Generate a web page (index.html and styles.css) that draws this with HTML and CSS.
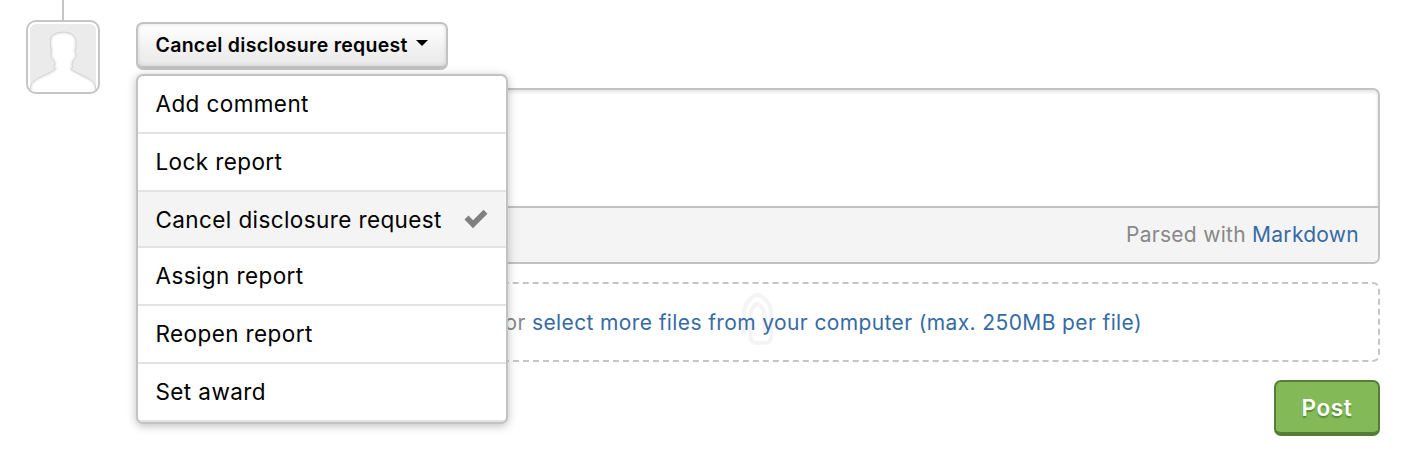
FILE: index.html
```html
<!DOCTYPE html>
<html lang="en">
<head>
<meta charset="utf-8">
<title>Report comment</title>
<link rel="stylesheet" href="styles.css">
</head>
<body>
<div class="composer">
  <div class="rail">
    <div class="thread-line"></div>
    <div class="avatar">
      <svg width="66" height="66" viewBox="0 0 66 66">
        <defs>
          <filter id="soft" x="-20%" y="-20%" width="140%" height="140%"><feGaussianBlur stdDeviation="1.3"/></filter>
          <path id="figure" d="M0.500 68V62C2 54 19 51 25.500 45L23.500 43C25.500 41 25 39 23.500 36C21 35 20 30 21.500 27.500C20 20 19 13 23 11C27 7.500 39 7 43 11C47 14 46.500 21 45 27.500C47 30 46 35 43.500 36C42 39 41.500 41 43 43L41 45C48 51 64 54 65.500 62V68Z"/>
          <clipPath id="person"><use href="#figure"/></clipPath>
        </defs>
        <rect width="66" height="66" fill="#ebebeb"/>
        <use href="#figure" fill="#fff" stroke="#cfcfcf" stroke-width="1"/>
        <g clip-path="url(#person)"><use href="#figure" fill="none" stroke="#ddd" stroke-width="2" filter="url(#soft)"/></g>
      </svg>
    </div>
  </div>
  <div class="main">
    <div class="dropdown">
      <button class="toggle"><span class="toggle-label">Cancel disclosure request</span><span class="caret"></span></button>
      <ul class="menu">
        <li class="item">Add comment</li>
        <li class="item">Lock report</li>
        <li class="item selected">Cancel disclosure request
          <svg class="check" width="24" height="20" viewBox="0 0 24 20"><path d="M2.500 8.500L9 15.200L21.500 2.800" fill="none" stroke="#808080" stroke-width="5.600"/></svg></li>
        <li class="item">Assign report</li>
        <li class="item">Reopen report</li>
        <li class="item">Set award</li>
      </ul>
    </div>
    <div class="editor">
      <div class="textarea"></div>
      <div class="editor-footer"><span>Parsed with <a class="link">Markdown</a></span></div>
    </div>
    <div class="dropzone">
      <svg class="clip" width="32" height="56" viewBox="0 0 32 56"><path d="M3 41V21C3 12 11 3 16.500 3S30 12 30 21V45Q30 51 24 51H15.500Q9.500 51 9.500 45V22C9.500 18 13 14 16.500 11.500C20 14 23.500 18 23.500 22V41" fill="none" stroke="#f4f4f4" stroke-width="4" stroke-linecap="round" stroke-linejoin="round"/></svg>
      <span class="drop-text">Drop files or <a class="link">select more files from your computer (max. 250MB per file)</a></span>
    </div>
    <button class="post">Post</button>
  </div>
</div>
</body>
</html>
```
FILE: styles.css
```css
* { box-sizing: border-box; }
body { margin: 0; background: #fff; font-family: Inter, "Liberation Sans", sans-serif; font-size: 22px; color: #000; }
.composer { display: flex; height: 458px; padding: 0 32px 0 26px; }
.rail { width: 74px; margin-right: 36px; }
.thread-line { width: 2px; height: 20px; margin-left: 36px; background: #c5c5c5; }
.avatar { width: 74px; height: 74px; border: 2px solid #c5c5c5; border-radius: 10px; padding: 2px; }
.avatar svg { display: block; border-radius: 6px 6px 2px 2px; }
.main { flex: 1; display: flex; flex-direction: column; padding-top: 22px; }
.dropdown { position: relative; height: 48px; margin-bottom: 18px; }
.toggle { display: flex; align-items: center; width: 312px; height: 48px; padding: 0 17px 0 17.5px; border: 2px solid #c2c2c2; border-bottom-width: 4px; border-radius: 7px; background: linear-gradient(#fff, #e8e8e8); box-shadow: inset 0 0 4px rgba(0,0,0,.12); font: 600 19.5px Inter, "Liberation Sans", sans-serif; color: #000; }
.toggle-label { letter-spacing: .28px; white-space: nowrap; }
.caret { flex: none; margin: -5px 0 0 8px; border: 6px solid transparent; border-top-color: #000; border-bottom: 0; }
.menu { position: absolute; z-index: 2; top: 52px; left: 0; width: 372px; height: 350px; margin: 0; padding: 0; list-style: none; background: #fff; border: 2px solid #c2c2c2; border-radius: 7px; box-shadow: 0 2px 10px rgba(0,0,0,.26); overflow: hidden; }
.item { display: flex; align-items: center; height: 58px; padding: 0 17px 2px 17.5px; border-bottom: 2px solid #e3e3e3; font-size: 22.5px; letter-spacing: .4px; white-space: nowrap; }
.selected { height: 56px; padding-bottom: 0; background: #f4f4f4; justify-content: space-between; }
.check { flex: none; margin-right: 1px; }
.editor { height: 176px; border: 2px solid #c2c2c2; border-radius: 7px; overflow: hidden; }
.textarea { height: 116px; box-shadow: inset 0 2px 4px rgba(0,0,0,.12); }
.editor-footer { display: flex; align-items: center; justify-content: flex-end; height: 56px; padding: 0 19px 2px 0; border-top: 2px solid #c2c2c2; background: #f4f4f4; color: #888; font-size: 21px; letter-spacing: .28px; }
.link { color: #356ba5; }
.dropzone { position: relative; display: flex; align-items: center; justify-content: flex-end; height: 80px; margin-top: 18px; padding-right: 236px; border: 2px dashed #c5c5c5; border-radius: 7px; color: #888; font-size: 21px; letter-spacing: .38px; white-space: nowrap; }
.clip { position: absolute; left: 603px; top: 8px; }
.drop-text { position: relative; }
.post { align-self: flex-end; width: 106px; height: 56px; margin-top: 18px; padding: 1px 0 0; border: 2px solid #567d36; border-bottom-width: 4px; border-radius: 7px; background: #83b957; color: #fff; font: 600 22.5px Inter, "Liberation Sans", sans-serif; letter-spacing: .6px; text-shadow: 0 2px 1px rgba(60,100,30,.55); }
```
